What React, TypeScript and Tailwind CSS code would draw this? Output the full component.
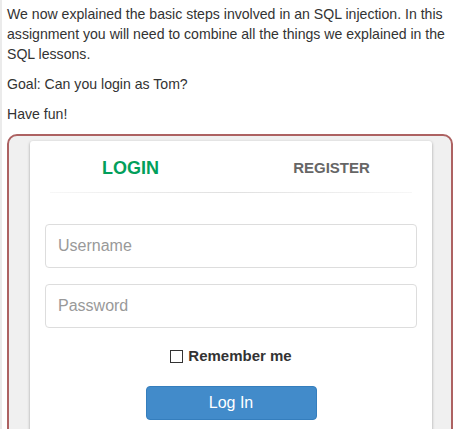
export default function App() {
  return (
    <div className="min-h-screen border-l-2 border-[#ebebeb] bg-white pl-[5px] pt-[4px] font-['Liberation_Sans',Arial,sans-serif] text-[14px] leading-[20px] text-[#333]">
      <div className="w-[444px] text-[14.1px]">
        <p className="mb-[10px]">
          We now explained the basic steps involved in an SQL injection. In this
          assignment you will need to combine all the things we explained in the
          SQL lessons.
        </p>
        <p className="mb-[10px]">Goal: Can you login as Tom?</p>
        <p className="mb-[10px]">Have fun!</p>
      </div>

      <div className="w-[446px] rounded-[10px] border-2 border-[#ad6262] bg-[#f0f0f0] pb-6 pl-[21px] pr-[19px] pt-[5px]">
        <div className="w-[402px] rounded-[3px] bg-white pb-8 shadow-[0_1px_3px_rgba(0,0,0,0.35)]">
          <div className="grid grid-cols-2 pt-[16px] text-center font-bold leading-[22px]">
            <span className="text-[18px] text-[#029f5b]">LOGIN</span>
            <span className="text-[15px] text-[#666]">REGISTER</span>
          </div>
          <div className="mx-5 mt-[13px] h-px bg-gradient-to-r from-[#f7f7f7] via-[#e0e0e0] to-[#f7f7f7]" />

          <form className="flex flex-col px-[15px] pt-[31px]">
            <input
              type="text"
              placeholder="Username"
              className="h-[44px] w-full rounded-[4px] border border-[#ddd] px-[12px] text-[16px] text-[#555] placeholder:text-[#999] focus:outline-none"
            />
            <input
              type="password"
              placeholder="Password"
              className="mt-[16px] h-[44px] w-full rounded-[4px] border border-[#ddd] px-[12px] text-[16px] text-[#555] placeholder:text-[#999] focus:outline-none"
            />

            <label className="mt-[18px] flex items-center justify-center gap-[5px] text-[15px] font-bold leading-[20px] text-[#333]">
              <span className="h-[13px] w-[13px] border-[1.5px] border-[#333] bg-white" />
              Remember me
            </label>

            <button
              type="button"
              className="mx-auto mt-[20px] h-[34px] w-[171px] rounded-[4px] border border-[#357ebd] bg-[#428bca] text-[16px] text-white"
            >
              Log In
            </button>
          </form>
        </div>
      </div>
    </div>
  );
}
